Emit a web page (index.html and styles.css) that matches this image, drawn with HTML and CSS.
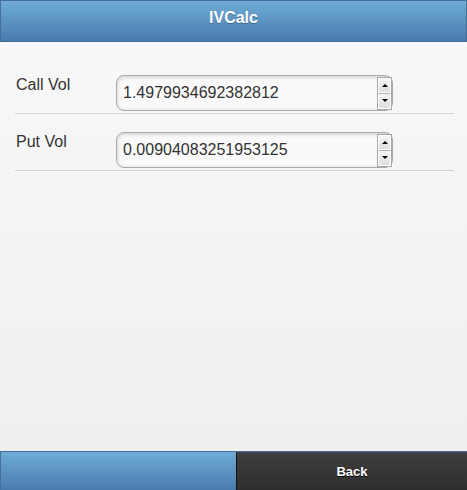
FILE: index.html
```html
<!DOCTYPE html>
<html>
<head>
<meta charset="utf-8">
<title>IVCalc</title>
<link rel="stylesheet" href="styles.css">
</head>
<body>
<div class="page">
  <header class="bar-header">
    <h1 class="title">IVCalc</h1>
  </header>
  <main class="content">
    <div class="field">
      <label class="field-label" for="callvol">Call Vol</label>
      <div class="num-box">
        <input class="num-input" id="callvol" type="text" value="1.4979934692382812">
        <div class="spinner">
          <span class="spin-btn"><span class="tri-up"></span></span>
          <span class="spin-btn"><span class="tri-down"></span></span>
        </div>
      </div>
    </div>
    <div class="field">
      <label class="field-label" for="putvol">Put Vol</label>
      <div class="num-box">
        <input class="num-input" id="putvol" type="text" value="0.00904083251953125">
        <div class="spinner">
          <span class="spin-btn"><span class="tri-up"></span></span>
          <span class="spin-btn"><span class="tri-down"></span></span>
        </div>
      </div>
    </div>
  </main>
  <footer class="bar-footer">
    <a class="nav-btn nav-active" href="#"></a>
    <a class="nav-btn nav-dark" href="#">Back</a>
  </footer>
</div>
</body>
</html>
```

FILE: styles.css
```css
* { box-sizing: border-box; }
html, body {
  margin: 0;
  padding: 0;
  height: 490px;
  overflow: hidden;
}
body {
  font-family: "Liberation Sans", Arial, Helvetica, sans-serif;
  color: #333;
}
.page {
  height: 490px;
  display: flex;
  flex-direction: column;
  background: linear-gradient(#f9f9f9, #eeeeee);
}
.bar-header {
  border: 1px solid #456f9a;
  background: linear-gradient(#6facd5, #497bae);
  padding: 8px 0 14px;
}
.title {
  margin: 0;
  font-size: 16px;
  line-height: 18px;
  font-weight: bold;
  color: #fff;
  text-align: center;
  text-shadow: 0 1px 0 #3e6790;
}
.content {
  flex: 1;
  padding: 15px 13px 0 15px;
}
.field {
  display: flex;
  align-items: flex-start;
  padding: 18px 0 2px;
  border-bottom: 1px solid rgba(0, 0, 0, 0.15);
}
.field-label {
  width: 101px;
  flex: none;
  padding-left: 1px;
  font-size: 16px;
  line-height: 19px;
  color: #333;
}
.num-box {
  width: 277px;
  height: 36px;
  display: flex;
  align-items: center;
  border: 1px solid #aaa;
  border-radius: 8px;
  background: #fafafa;
  box-shadow: inset 0 1px 4px rgba(0, 0, 0, 0.2);
  padding: 0 0 0 6px;
}
.num-input {
  flex: 1;
  min-width: 0;
  border: 0;
  outline: 0;
  background: transparent;
  padding: 0;
  margin: 0;
  font-family: "Liberation Sans", Arial, Helvetica, sans-serif;
  font-size: 16px;
  color: #333;
}
.spinner {
  width: 15px;
  height: 33px;
  display: flex;
  flex-direction: column;
  border: 1px solid #a6a6a6;
  background: #e4e4e4;
  margin-right: 0;
}
.spin-btn {
  flex: 1;
  display: flex;
  align-items: center;
  justify-content: center;
  background: linear-gradient(#f4f4f4, #dedede);
  border: 1px solid #fff;
}
.spin-btn + .spin-btn {
  border-top: 1px solid #b0b0b0;
}
.tri-up {
  width: 0;
  height: 0;
  border-left: 3px solid transparent;
  border-right: 3px solid transparent;
  border-bottom: 3px solid #000;
}
.tri-down {
  width: 0;
  height: 0;
  border-left: 3px solid transparent;
  border-right: 3px solid transparent;
  border-top: 3px solid #000;
}
.bar-footer {
  display: grid;
  grid-template-columns: 236px 1fr;
  border-top: 1px solid #456f9a;
  height: 39px;
}
.nav-btn {
  display: flex;
  align-items: center;
  justify-content: center;
  text-decoration: none;
  font-size: 13px;
  font-weight: bold;
  color: #fff;
}
.nav-active {
  background: linear-gradient(#6facd5, #497bae);
  border-left: 1px solid #456f9a;
}
.nav-dark {
  background: linear-gradient(#3e3e3e, #2e2e2e);
  border-left: 1px solid #111;
  border-top: 1px solid #4a4a4a;
  text-shadow: 0 1px 0 #000;
}
```
